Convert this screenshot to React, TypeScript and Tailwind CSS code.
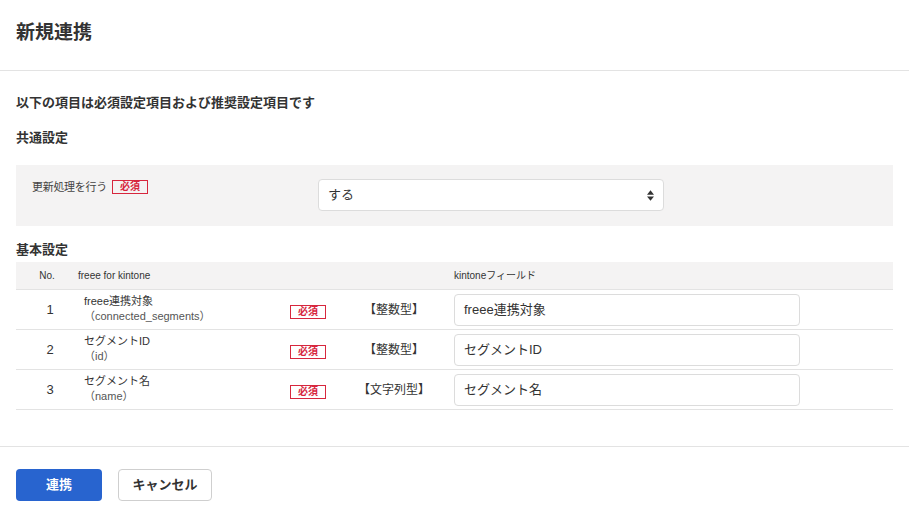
const rows = [
  { no: 1, name: "freee連携対象", key: "（connected_segments）", type: "【整数型】", value: "freee連携対象" },
  { no: 2, name: "セグメントID", key: "（id）", type: "【整数型】", value: "セグメントID" },
  { no: 3, name: "セグメント名", key: "（name）", type: "【文字列型】", value: "セグメント名" },
]

function Required() {
  return (
    <span className="inline-flex items-center justify-center w-[36px] h-[14px] border border-[#d7263d] text-[#d7263d] text-[10px] font-bold leading-none">
      必須
    </span>
  )
}

export default function App() {
  const font = { fontFamily: '"Liberation Sans", "Noto Sans CJK JP", sans-serif' }
  return (
    <div className="w-[909px] h-[510px] bg-white text-[#333] overflow-hidden" style={font}>
      {/* header */}
      <div className="h-[71px] border-b border-[#e3e3e3] flex items-center px-4">
        <h1 className="text-[19px] font-bold text-[#333] -mt-1">新規連携</h1>
      </div>

      <div className="px-4 pt-[24px]">
        <p className="text-[13px] font-bold leading-4">以下の項目は必須設定項目および推奨設定項目です</p>
        <h2 className="text-[13px] font-bold mt-[19px] leading-4">共通設定</h2>

        <div className="mt-[19px] h-[61px] bg-[#f4f3f3] flex items-start pt-[14px] px-[16px]">
          <div className="w-[286px] flex items-center gap-[5px] text-[11px] text-[#444]">
            <span className="tracking-[-0.3px]">更新処理を行う</span>
            <Required />
          </div>
          <div className="w-[346px] h-[32px] bg-white border border-[#dcdcdc] rounded-[4px] flex items-center justify-between px-[9px] text-[13px]">
            <span>する</span>
            <svg viewBox="0 0 8 12" className="w-[7px] h-[11px] text-[#333]">
              <path d="M4 0 L8 5 H0 Z M0 7 H8 L4 12 Z" fill="currentColor" />
            </svg>
          </div>
        </div>

        <h2 className="text-[13px] font-bold mt-[16px] leading-4">基本設定</h2>

        <div className="mt-[4px]">
          <div className="h-[28px] bg-[#f4f3f3] border-b border-[#e3e3e3] flex items-center text-[10px] text-[#333]">
            <div className="w-[62px] text-center">No.</div>
            <div className="w-[376px]">freee for kintone</div>
            <div>kintoneフィールド</div>
          </div>
          {rows.map((r) => (
            <div key={r.no} className="h-[40px] border-b border-[#e3e3e3] flex items-center">
              <div className="w-[68px] text-center text-[13px]">{r.no}</div>
              <div className="w-[206px] text-[11px] leading-[15px] -mt-[1px]">
                <div>{r.name}</div>
                <div className="text-[#555]">{r.key}</div>
              </div>
              <div className="w-[56px]">
                <Required />
              </div>
              <div className="w-[96px] text-center text-[12px]">{r.type}</div>
              <div className="ml-[12px] w-[346px] h-[32px] border border-[#dcdcdc] rounded-[4px] flex items-center px-[9px] text-[13px]">
                {r.value}
              </div>
            </div>
          ))}
        </div>
      </div>

      <div className="mt-[36px] border-t border-[#e3e3e3] px-4 pt-[22px] flex gap-4">
        <button className="w-[86px] h-[32px] rounded-[4px] bg-[#2864cf] text-white text-[13px] font-bold">連携</button>
        <button className="w-[94px] h-[32px] rounded-[4px] border border-[#cfcfcf] bg-white text-[13px] font-bold text-[#333]">
          キャンセル
        </button>
      </div>
    </div>
  )
}
